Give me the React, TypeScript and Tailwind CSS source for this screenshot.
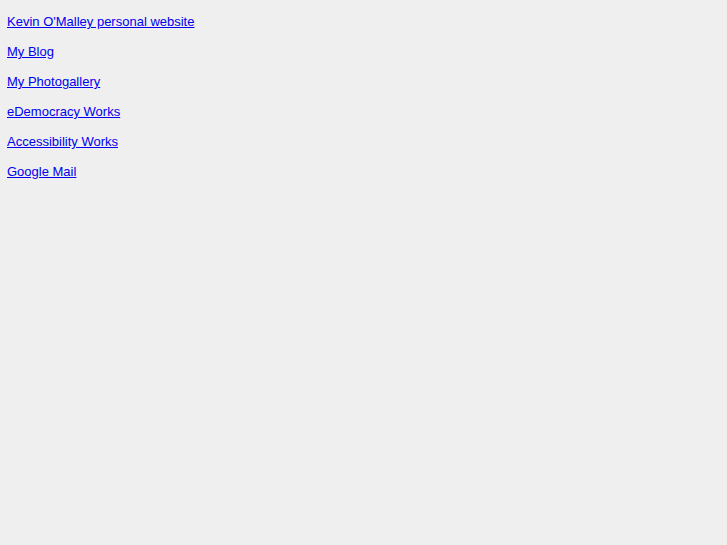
const links = [
  'Kevin O\'Malley personal website',
  'My Blog',
  'My Photogallery',
  'eDemocracy Works',
  'Accessibility Works',
  'Google Mail',
];

export default function App() {
  return (
    <div className="min-h-screen bg-[#efefef] px-[7px] pt-[7px] font-['Liberation_Sans',Arial,sans-serif] text-[13px]">
      <ul className="flex flex-col items-start">
        {links.map((l) => (
          <li key={l} className="leading-[30px]">
            <a href="#" className="text-[#0000ee] underline">
              {l}
            </a>
          </li>
        ))}
      </ul>
    </div>
  );
}
